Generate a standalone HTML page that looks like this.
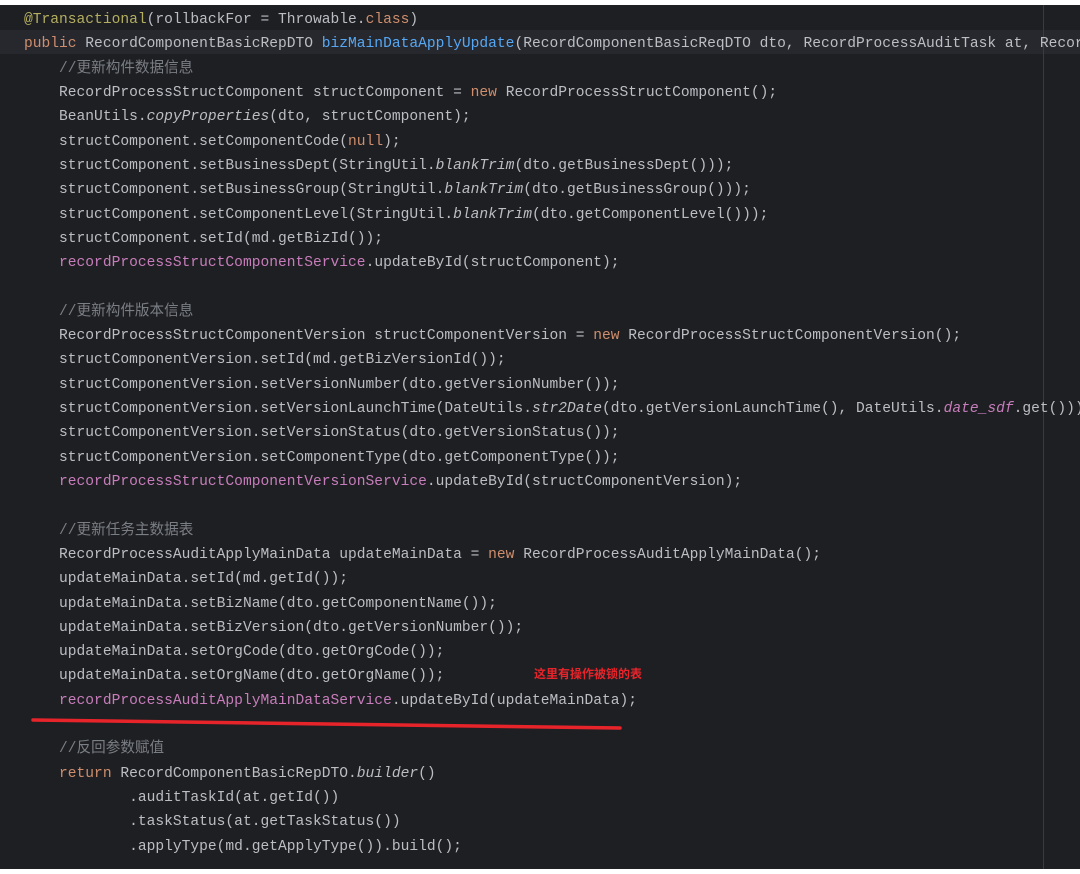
<!DOCTYPE html>
<html><head><meta charset="utf-8"><style>
html,body{margin:0;padding:0;background:#fff;width:1080px;height:874px;overflow:hidden}
#ed{position:absolute;left:0;top:5px;width:1080px;height:864px;background:#1e1f22;overflow:hidden}
#hl{position:absolute;left:0;top:25px;width:1080px;height:24px;background:#26282e}
#vl{position:absolute;left:1043px;top:0;width:1px;height:864px;background:#393b40}
pre{position:absolute;left:24px;top:3px;margin:0;font-family:"Liberation Mono","Noto Sans CJK SC",monospace;font-size:14.6px;line-height:24.32px;color:#bcbec4;white-space:pre}
.k{color:#cf8e6d}.a{color:#b3ae60}.m{color:#56a8f5}.f{color:#c77dbb}.c{color:#7a7e85}.i{font-style:italic}.fi{color:#c77dbb;font-style:italic}
#red{position:absolute;left:534px;top:660px;color:#e8242b;font-family:"Liberation Sans","Noto Sans CJK SC",sans-serif;font-size:12px;font-weight:bold}
</style></head><body>
<div id="ed"><div id="hl"></div><div id="vl"></div>
<pre><span class="a">@Transactional</span>(rollbackFor = Throwable.<span class="k">class</span>)
<span class="k">public</span> RecordComponentBasicRepDTO <span class="m">bizMainDataApplyUpdate</span>(RecordComponentBasicReqDTO dto, RecordProcessAuditTask at, RecordProcessAuditApplyMainData md)
    <span class="c">//更新构件数据信息</span>
    RecordProcessStructComponent structComponent = <span class="k">new</span> RecordProcessStructComponent();
    BeanUtils.<span class="i">copyProperties</span>(dto, structComponent);
    structComponent.setComponentCode(<span class="k">null</span>);
    structComponent.setBusinessDept(StringUtil.<span class="i">blankTrim</span>(dto.getBusinessDept()));
    structComponent.setBusinessGroup(StringUtil.<span class="i">blankTrim</span>(dto.getBusinessGroup()));
    structComponent.setComponentLevel(StringUtil.<span class="i">blankTrim</span>(dto.getComponentLevel()));
    structComponent.setId(md.getBizId());
    <span class="f">recordProcessStructComponentService</span>.updateById(structComponent);

    <span class="c">//更新构件版本信息</span>
    RecordProcessStructComponentVersion structComponentVersion = <span class="k">new</span> RecordProcessStructComponentVersion();
    structComponentVersion.setId(md.getBizVersionId());
    structComponentVersion.setVersionNumber(dto.getVersionNumber());
    structComponentVersion.setVersionLaunchTime(DateUtils.<span class="i">str2Date</span>(dto.getVersionLaunchTime(), DateUtils.<span class="fi">date_sdf</span>.get()));
    structComponentVersion.setVersionStatus(dto.getVersionStatus());
    structComponentVersion.setComponentType(dto.getComponentType());
    <span class="f">recordProcessStructComponentVersionService</span>.updateById(structComponentVersion);

    <span class="c">//更新任务主数据表</span>
    RecordProcessAuditApplyMainData updateMainData = <span class="k">new</span> RecordProcessAuditApplyMainData();
    updateMainData.setId(md.getId());
    updateMainData.setBizName(dto.getComponentName());
    updateMainData.setBizVersion(dto.getVersionNumber());
    updateMainData.setOrgCode(dto.getOrgCode());
    updateMainData.setOrgName(dto.getOrgName());
    <span class="f">recordProcessAuditApplyMainDataService</span>.updateById(updateMainData);

    <span class="c">//反回参数赋值</span>
    <span class="k">return</span> RecordComponentBasicRepDTO.<span class="i">builder</span>()
            .auditTaskId(at.getId())
            .taskStatus(at.getTaskStatus())
            .applyType(md.getApplyType()).build();</pre>
<div id="red">这里有操作被锁的表</div>
<svg style="position:absolute;left:0;top:0" width="1080" height="864"><path d="M33 715 Q300 718 620 723" stroke="#e8242b" stroke-width="3.5" fill="none" stroke-linecap="round"/></svg>
</div>
</body></html>
